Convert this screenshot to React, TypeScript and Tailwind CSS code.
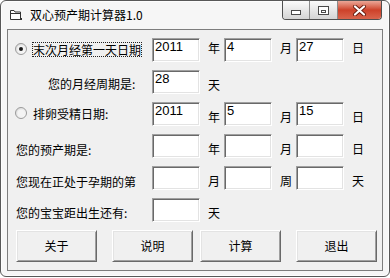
import React from "react"

const cjk = "font-['Noto_Sans_CJK_SC','Noto_Sans_CJK_JP',sans-serif]"

function Edit({ value }: { value?: string }) {
  return (
    <div className="w-[48px] h-[24px] shrink-0 bg-white border border-t-[#a0a0a0] border-l-[#a0a0a0] border-b-white border-r-white">
      <div className="h-full pl-[2px] pt-[1px] shadow-[inset_1px_1px_0_#696969,inset_-1px_-1px_0_#e3e3e3] font-['Liberation_Sans',Arial,sans-serif] text-[13px] leading-[14px] text-black">
        {value}
      </div>
    </div>
  )
}

function Unit({ text, first }: { text: string; first?: boolean }) {
  return (
    <span className={first ? "w-[24px] shrink-0 pl-[8px] mt-[2px] leading-[16px]" : "w-[24px] shrink-0 pl-[8px] mt-[7px] leading-[16px]"}>
      {text}
    </span>
  )
}

function Radio({ checked }: { checked?: boolean }) {
  return (
    <svg width="12" height="12" viewBox="0 0 12 12" className="mt-[5px] shrink-0">
      <defs>
        <linearGradient id={checked ? "rg1" : "rg2"} x1="0" y1="0" x2="1" y2="1">
          <stop offset="0" stopColor="#d8d8d8" />
          <stop offset="1" stopColor="#ffffff" />
        </linearGradient>
      </defs>
      <circle cx="6" cy="6" r="5.5" fill={`url(#${checked ? "rg1" : "rg2"})`} stroke="#9a9a9a" />
      <circle cx="6" cy="6" r="3.6" fill="#f4f4f4" />
      {checked && <circle cx="6" cy="6" r="2" fill="#1a1a1a" />}
    </svg>
  )
}

function Btn({ label, className }: { label: string; className?: string }) {
  return (
    <div
      className={
        "w-[81px] h-[32px] shrink-0 flex items-center justify-center bg-[#f0f0f0] border border-t-white border-l-white border-r-[#696969] border-b-[#696969] shadow-[inset_1px_1px_0_#e3e3e3,inset_-1px_-1px_0_#a0a0a0] leading-[16px] " +
        (className ?? "")
      }
    >
      {label}
    </div>
  )
}

export default function App() {
  return (
    <div className={`w-[390px] h-[278px] bg-white text-[12px] text-black ${cjk}`}>
      <div className="w-[390px] h-[277px] flex flex-col rounded-[6px] border border-[#585858] bg-[#f6f6f6] shadow-[inset_0_0_0_1px_#fdfdfd] overflow-hidden">
        {/* title bar */}
        <div className="h-[28px] shrink-0 flex items-start">
          <svg width="12" height="10" viewBox="0 0 12 10" className="ml-[9px] mt-[9px] shrink-0">
            <path d="M0.5 9.5V0.5H4L5 2H10.5V9.5Z" fill="#fff" stroke="#333" />
            <path d="M0.5 3.5H10.5" stroke="#333" />
            <rect x="10" y="8" width="2" height="2" fill="#333" />
          </svg>
          <span className="ml-[8px] mt-[6px] leading-[16px] tracking-[0px]">双心预产期计算器1.0</span>
          <div className="flex-1" />
          <div className="mr-[7px] h-[19px] flex rounded-b-[4px] border border-t-0 border-[#4f4f4f] overflow-hidden">
            <div className="w-[27px] h-full flex items-end justify-center pb-[4px] border-r border-[#8a8a8a] bg-gradient-to-b from-[#fbfbfb] to-[#d4d4d4]">
              <div className="w-[10px] h-[5px] border border-[#4a4a4a] bg-white" />
            </div>
            <div className="w-[28px] h-full flex items-center justify-center border-r border-[#8a8a8a] bg-gradient-to-b from-[#fbfbfb] to-[#d4d4d4]">
              <div className="w-[11px] h-[9px] border border-[#4a4a4a] bg-white flex items-end justify-center pb-[1px]">
                <div className="w-[5px] h-[3px] border border-[#4a4a4a]" />
              </div>
            </div>
            <div className="w-[43px] h-full flex items-center justify-center bg-gradient-to-b from-[#eaa697] via-[#cd4129] to-[#d9644c]">
              <svg width="15" height="11" viewBox="0 0 15 11">
                <path d="M3 1.5L12 9.5M12 1.5L3 9.5" stroke="#6a1d10" strokeWidth="4" strokeLinecap="round" />
                <path d="M3 1.5L12 9.5M12 1.5L3 9.5" stroke="#ffffff" strokeWidth="2.2" strokeLinecap="round" />
              </svg>
            </div>
          </div>
        </div>

        {/* client area */}
        <div className="mx-[6px] h-[242px] shrink-0 border border-[#7d7d7d] bg-[#f0f0f0] pt-[8px] flex flex-col gap-[8px]">
          <div className="h-[24px] flex items-start">
            <div className="w-[144px] shrink-0 flex items-start pl-[7px]">
              <Radio checked />
              <span className="ml-[5px] mt-[4px] h-[15px] border border-dotted border-[#222] leading-[13px] whitespace-nowrap">
                末次月经第一天日期
              </span>
            </div>
            <Edit value="2011" />
            <Unit text="年" first />
            <Edit value="4" />
            <Unit text="月" first />
            <Edit value="27" />
            <Unit text="日" first />
          </div>

          <div className="h-[24px] flex items-start">
            <div className="w-[144px] shrink-0 pl-[40px] mt-[6px] leading-[16px] whitespace-nowrap">您的月经周期是:</div>
            <Edit value="28" />
            <Unit text="天" />
          </div>

          <div className="h-[24px] flex items-start">
            <div className="w-[144px] shrink-0 flex items-start pl-[7px]">
              <Radio />
              <span className="ml-[5px] mt-[4px] h-[15px] border border-transparent leading-[13px] whitespace-nowrap">
                排卵受精日期:
              </span>
            </div>
            <Edit value="2011" />
            <Unit text="年" />
            <Edit value="5" />
            <Unit text="月" />
            <Edit value="15" />
            <Unit text="日" />
          </div>

          <div className="h-[24px] flex items-start">
            <div className="w-[144px] shrink-0 pl-[8px] mt-[8px] leading-[16px] whitespace-nowrap">您的预产期是:</div>
            <Edit />
            <Unit text="年" />
            <Edit />
            <Unit text="月" />
            <Edit />
            <Unit text="日" />
          </div>

          <div className="h-[24px] flex items-start">
            <div className="w-[144px] shrink-0 pl-[8px] mt-[8px] leading-[16px] whitespace-nowrap">您现在正处于孕期的第</div>
            <Edit />
            <Unit text="月" />
            <Edit />
            <Unit text="周" />
            <Edit />
            <Unit text="天" />
          </div>

          <div className="h-[24px] flex items-start">
            <div className="w-[144px] shrink-0 pl-[8px] mt-[7px] leading-[16px] whitespace-nowrap">您的宝宝距出生还有:</div>
            <Edit />
            <Unit text="天" />
          </div>

          <div className="flex items-start">
            <Btn label="关于" className="ml-[8px]" />
            <Btn label="说明" className="ml-[15px]" />
            <Btn label="计算" className="ml-[7px]" />
            <Btn label="退出" className="ml-[15px]" />
          </div>
        </div>
      </div>
    </div>
  )
}
